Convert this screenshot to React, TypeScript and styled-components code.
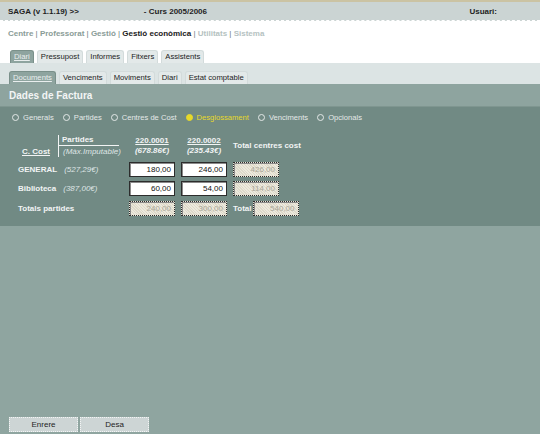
import styled, { createGlobalStyle } from 'styled-components'

const GlobalStyle = createGlobalStyle`
    html, body {
        margin: 0;
        padding: 0;
        background: #8fa5a0;
    }
    body {
        font-family: "Liberation Sans", Arial, sans-serif;
        font-size: 8px;
    }
`;

type Link = { label: string; tone: 'dim' | 'active' | 'off' }

const links: Link[] = [
    { label: 'Centre', tone: 'dim' },
    { label: 'Professorat', tone: 'dim' },
    { label: 'Gestió', tone: 'dim' },
    { label: 'Gestió econòmica', tone: 'active' },
    { label: 'Utilitats', tone: 'off' },
    { label: 'Sistema', tone: 'off' },
]

const mainTabs = ['Diari', 'Pressupost', 'Informes', 'Fitxers', 'Assistents']
const subTabs = ['Documents', 'Venciments', 'Moviments', 'Diari', 'Estat comptable']
const steps = ['Generals', 'Partides', 'Centres de Cost', 'Desglossament', 'Venciments', 'Opcionals']

const rows = [
    { name: 'GENERAL', max: '(527,29€)', values: ['180,00', '246,00'], total: '426,00' },
    { name: 'Biblioteca', max: '(387,00€)', values: ['60,00', '54,00'], total: '114,00' },
]

const App = () => {
    return (
        <Page>
            <GlobalStyle />
            <TopBar>
                <TopText>SAGA (v 1.1.19) &gt;&gt;</TopText>
                <TopText $grow>- Curs 2005/2006</TopText>
                <TopText $user>Usuari:</TopText>
            </TopBar>
            <NavArea>
                <NavLinks>
                    {links.map((l, i) => (
                        <span key={l.label}>
                            <NavLink $tone={l.tone}>{l.label}</NavLink>
                            {i < links.length - 1 && <Sep> | </Sep>}
                        </span>
                    ))}
                </NavLinks>
                <TabRow>
                    {mainTabs.map((t, i) => (
                        <Tab key={t} $active={i === 0}>{t}</Tab>
                    ))}
                </TabRow>
            </NavArea>
            <SubBar>
                {subTabs.map((t, i) => (
                    <Tab key={t} $active={i === 0}>{t}</Tab>
                ))}
            </SubBar>
            <Header>Dades de Factura</Header>
            <Content>
                <Steps>
                    {steps.map((s) => (
                        <Step key={s} $on={s === 'Desglossament'}>
                            <Radio $on={s === 'Desglossament'} />
                            {s}
                        </Step>
                    ))}
                </Steps>
                <Table>
                    <Corner>
                        <CCost>C. Cost</CCost>
                        <PartidesBox>
                            <PartidesTitle>Partides</PartidesTitle>
                            <MaxLabel>(Màx.Imputable)</MaxLabel>
                        </PartidesBox>
                    </Corner>
                    <ColHead>
                        <Code>220.0001</Code>
                        <Amount>(678.86€)</Amount>
                    </ColHead>
                    <ColHead>
                        <Code>220.0002</Code>
                        <Amount>(235.43€)</Amount>
                    </ColHead>
                    <TotalHead>Total centres cost</TotalHead>

                    {rows.map((r) => (
                        <Row key={r.name}>
                            <RowLabel>
                                <b>{r.name}</b>
                                <Max>{r.max}</Max>
                            </RowLabel>
                            {r.values.map((v, i) => (
                                <Field key={i}>{v}</Field>
                            ))}
                            <Field $disabled>{r.total}</Field>
                        </Row>
                    ))}

                    <Row>
                        <RowLabel><b>Totals partides</b></RowLabel>
                        <Field $disabled>240,00</Field>
                        <Field $disabled>300,00</Field>
                        <GrandTotal>
                            <b>Total</b>
                            <Field $disabled>540,00</Field>
                        </GrandTotal>
                    </Row>
                </Table>
            </Content>
            <Footer>
                <FootButton>Enrere</FootButton>
                <FootButton>Desa</FootButton>
            </Footer>
        </Page>
    )
}

const Page = styled.div`
    display: flex;
    flex-direction: column;
    min-height: 434px;
    background: #8fa5a0;
`;
const TopBar = styled.div`
    display: flex;
    align-items: center;
    height: 18px;
    padding: 0 8px;
    background: #cbd4d3;
    border-top: 2px solid #cbc3a3;
    border-bottom: 1px dashed #ffffff;
`;
const TopText = styled.span<{ $grow?: boolean; $user?: boolean }>`
    font-size: 8px;
    font-weight: bold;
    color: #1e1e1e;
    margin-left: ${(p) => (p.$grow ? '65px' : '0')};
    flex: ${(p) => (p.$grow ? '1' : '0 0 auto')};
    margin-right: ${(p) => (p.$user ? '35px' : '0')};
`;
const NavArea = styled.div`
    background: #ffffff;
    padding: 8px 0 0 8px;
`;
const NavLinks = styled.div`
    height: 12px;
    font-size: 8px;
    font-weight: bold;
`;
const NavLink = styled.span<{ $tone: 'dim' | 'active' | 'off' }>`
    color: ${(p) => (p.$tone === 'active' ? '#1a1a1a' : p.$tone === 'dim' ? '#8a9c97' : '#b5c2c1')};
`;
const Sep = styled.span`
    color: #6d7a78;
    font-weight: normal;
`;
const TabRow = styled.div`
    display: flex;
    gap: 3px;
    margin-top: 9px;
    padding-left: 2px;
`;
const Tab = styled.div<{ $active?: boolean }>`
    height: 12px;
    line-height: 12px;
    padding: 0 3px;
    font-size: 7.7px;
    color: ${(p) => (p.$active ? '#e9eeee' : '#1c1c1c')};
    text-decoration: ${(p) => (p.$active ? 'underline' : 'none')};
    background: ${(p) => (p.$active ? '#8ea49f' : '#e3e9e9')};
    border: 1px solid ${(p) => (p.$active ? '#7a908a' : '#d3dbdb')};
    border-bottom: none;
    border-radius: 3px 3px 0 0;
`;
const SubBar = styled.div`
    display: flex;
    gap: 3px;
    height: 21px;
    box-sizing: border-box;
    padding: 8px 0 0 9px;
    background: #dce4e4;
`;
const Header = styled.div`
    height: 22px;
    line-height: 24px;
    padding-left: 9px;
    font-size: 10px;
    font-weight: bold;
    color: #f3f5f5;
    background: #8ea49f;
`;
const Content = styled.div`
    height: 119px;
    background: #718a84;
    border-top: 1px solid #7f9690;
`;
const Steps = styled.div`
    display: flex;
    gap: 9px;
    padding: 4px 0 0 12px;
    height: 12px;
`;
const Step = styled.div<{ $on?: boolean }>`
    display: flex;
    align-items: center;
    gap: 4px;
    font-size: 7.6px;
    color: ${(p) => (p.$on ? '#e6d92a' : '#e4e9e8')};
`;
const Radio = styled.span<{ $on?: boolean }>`
    width: 5px;
    height: 5px;
    border-radius: 50%;
    border: 1px solid ${(p) => (p.$on ? '#e6d92a' : '#e4e9e8')};
    background: ${(p) => (p.$on ? '#e6d92a' : 'transparent')};
`;
const Table = styled.div`
    display: grid;
    grid-template-columns: 105px 46px 46px auto;
    column-gap: 6px;
    row-gap: 4.5px;
    padding: 12px 0 0 18px;
    color: #f2f4f4;
    font-size: 8px;
    justify-content: start;
`;
const Corner = styled.div`
    display: flex;
    align-items: flex-end;
    height: 22px;
`;
const CCost = styled.span`
    font-weight: bold;
    text-decoration: underline;
    width: 36px;
    padding-left: 4px;
    padding-bottom: 1px;
`;
const PartidesBox = styled.div`
    display: flex;
    flex-direction: column;
    height: 22px;
    border-left: 1px solid #f2f4f4;
`;
const PartidesTitle = styled.span`
    font-weight: bold;
    padding-left: 3px;
    width: 57px;
    border-bottom: 1px solid #f2f4f4;
    line-height: 10px;
`;
const MaxLabel = styled.span`
    font-style: italic;
    padding-left: 4px;
    color: #dfe5e4;
    line-height: 11px;
`;
const ColHead = styled.div`
    display: flex;
    flex-direction: column;
    align-items: center;
    padding-top: 1px;
    font-weight: bold;
`;
const Code = styled.span`
    text-decoration: underline;
    line-height: 10px;
`;
const Amount = styled.span`
    font-style: italic;
    line-height: 10px;
`;
const TotalHead = styled.div`
    font-weight: bold;
    padding-top: 6px;
    line-height: 10px;
`;
const Row = styled.div`
    display: contents;
`;
const RowLabel = styled.div`
    display: flex;
    align-items: center;
    gap: 7px;
    height: 15px;
`;
const Max = styled.span`
    font-style: italic;
    color: #dfe5e4;
`;
const Field = styled.div<{ $disabled?: boolean }>`
    box-sizing: border-box;
    width: 46px;
    height: 15px;
    line-height: 13px;
    padding-right: 3px;
    text-align: right;
    font-size: 8px;
    color: ${(p) => (p.$disabled ? '#a9a698' : '#111111')};
    background: ${(p) =>
        p.$disabled
            ? 'repeating-linear-gradient(45deg, #ece9dd 0 1px, #dedacb 1px 2px)'
            : '#ffffff'};
    border: 1px ${(p) => (p.$disabled ? 'dotted' : 'solid')} #2c2c2c;
    box-shadow: inset 1px 1px 0 #8a8a8a;
`;
const GrandTotal = styled.div`
    display: flex;
    align-items: center;
    gap: 1px;
`;
const Footer = styled.div`
    flex: 1;
    display: flex;
    align-items: flex-end;
    gap: 2px;
    padding: 0 0 2px 9px;
    background: #8fa5a0;
`;
const FootButton = styled.button`
    width: 69px;
    height: 15px;
    padding: 0;
    font-family: "Liberation Sans", Arial, sans-serif;
    font-size: 8px;
    color: #1e1e1e;
    background: #cdd5d5;
    border: 1px dotted #f3f5f5;
    cursor: pointer;
`;

export default App
